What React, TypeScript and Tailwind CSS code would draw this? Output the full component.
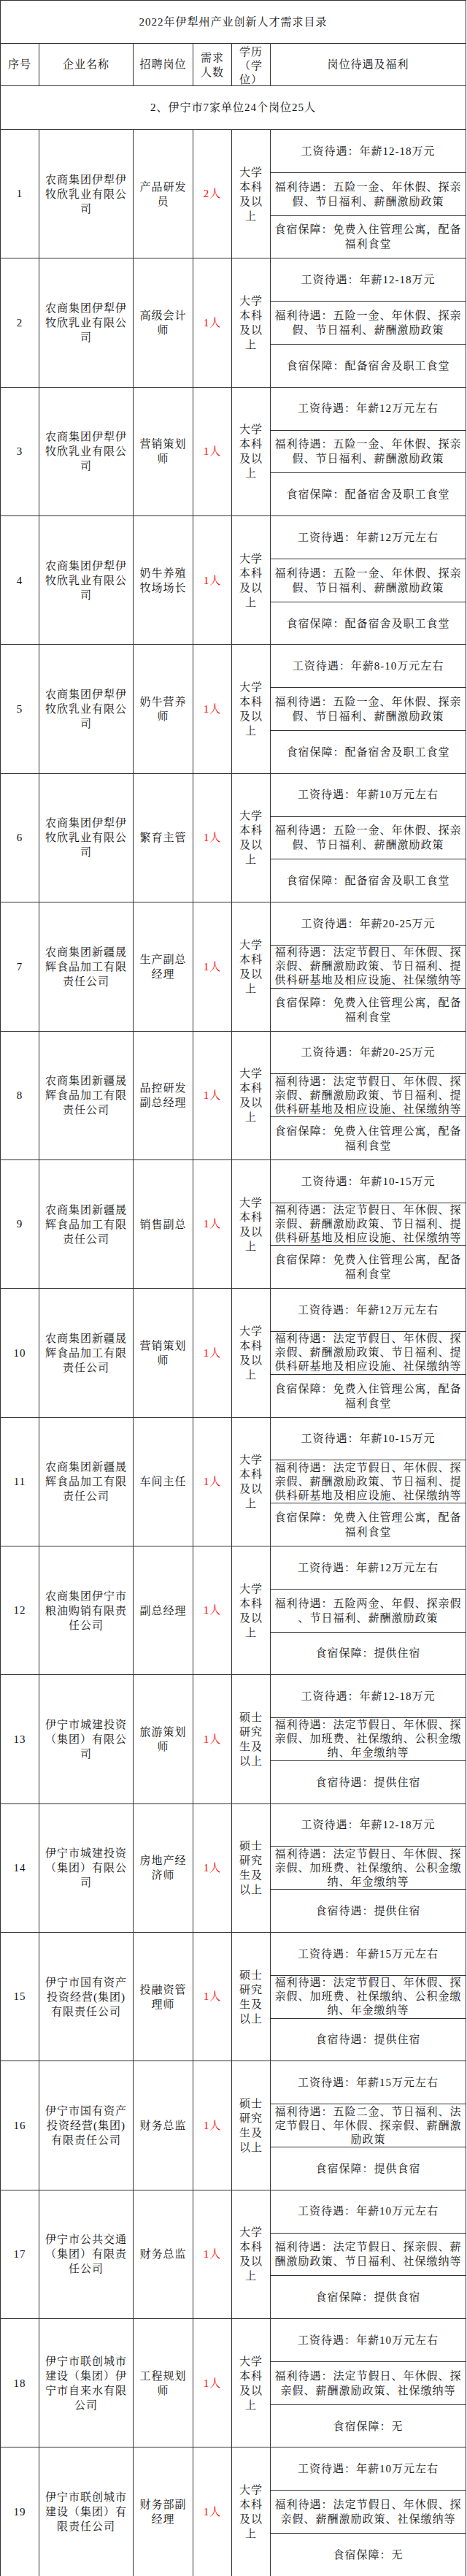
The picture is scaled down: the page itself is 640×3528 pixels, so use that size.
import React from "react";

const W1 = ["福利待遇：五险一金、年休假、探亲", "假、节日福利、薪酬激励政策"];
const W2 = ["福利待遇：法定节假日、年休假、探", "亲假、薪酬激励政策、节日福利、提", "供科研基地及相应设施、社保缴纳等"];
const W3 = ["福利待遇：五险两金、年假、探亲假", "、节日福利、薪酬激励政策"];
const W4 = ["福利待遇：法定节假日、年休假、探", "亲假、加班费、社保缴纳、公积金缴", "纳、年金缴纳等"];
const W5 = ["福利待遇：五险二金、节日福利、法", "定节假日、年休假、探亲假、薪酬激", "励政策"];
const W6 = ["福利待遇：法定节假日、探亲假、薪", "酬激励政策、节日福利、社保缴纳等"];
const W7 = ["福利待遇：法定节假日、年休假、探", "亲假、薪酬激励政策、社保缴纳等"];

const F1 = ["食宿保障：免费入住管理公寓，配备", "福利食堂"];
const F2 = ["食宿保障：配备宿舍及职工食堂"];
const F3 = ["食宿保障：提供住宿"];
const F4 = ["食宿待遇：提供住宿"];
const F5 = ["食宿保障：提供食宿"];
const F6 = ["食宿保障：无"];

const C1 = ["农商集团伊犁伊", "牧欣乳业有限公", "司"];
const C2 = ["农商集团新疆晟", "辉食品加工有限", "责任公司"];
const C3 = ["农商集团伊宁市", "粮油购销有限责", "任公司"];
const C4 = ["伊宁市城建投资", "（集团）有限公", "司"];
const C5 = ["伊宁市国有资产", "投资经营(集团)", "有限责任公司"];
const C6 = ["伊宁市公共交通", "（集团）有限责", "任公司"];
const C7 = ["伊宁市联创城市", "建设（集团）伊", "宁市自来水有限", "公司"];
const C8 = ["伊宁市联创城市", "建设（集团）有", "限责任公司"];

const E1 = ["大学", "本科", "及以", "上"];
const E2 = ["硕士", "研究", "生及", "以上"];

type Row = {
  company: string[];
  pos: string[];
  num: string;
  edu: string[];
  salary: string;
  welfare: string[];
  food: string[];
};

const rows: Row[] = [
  { company: C1, pos: ["产品研发", "员"], num: "2人", edu: E1, salary: "工资待遇：年薪12-18万元", welfare: W1, food: F1 },
  { company: C1, pos: ["高级会计", "师"], num: "1人", edu: E1, salary: "工资待遇：年薪12-18万元", welfare: W1, food: F2 },
  { company: C1, pos: ["营销策划", "师"], num: "1人", edu: E1, salary: "工资待遇：年薪12万元左右", welfare: W1, food: F2 },
  { company: C1, pos: ["奶牛养殖", "牧场场长"], num: "1人", edu: E1, salary: "工资待遇：年薪12万元左右", welfare: W1, food: F2 },
  { company: C1, pos: ["奶牛营养", "师"], num: "1人", edu: E1, salary: "工资待遇：年薪8-10万元左右", welfare: W1, food: F2 },
  { company: C1, pos: ["繁育主管"], num: "1人", edu: E1, salary: "工资待遇：年薪10万元左右", welfare: W1, food: F2 },
  { company: C2, pos: ["生产副总", "经理"], num: "1人", edu: E1, salary: "工资待遇：年薪20-25万元", welfare: W2, food: F1 },
  { company: C2, pos: ["品控研发", "副总经理"], num: "1人", edu: E1, salary: "工资待遇：年薪20-25万元", welfare: W2, food: F1 },
  { company: C2, pos: ["销售副总"], num: "1人", edu: E1, salary: "工资待遇：年薪10-15万元", welfare: W2, food: F1 },
  { company: C2, pos: ["营销策划", "师"], num: "1人", edu: E1, salary: "工资待遇：年薪12万元左右", welfare: W2, food: F1 },
  { company: C2, pos: ["车间主任"], num: "1人", edu: E1, salary: "工资待遇：年薪10-15万元", welfare: W2, food: F1 },
  { company: C3, pos: ["副总经理"], num: "1人", edu: E1, salary: "工资待遇：年薪12万元左右", welfare: W3, food: F3 },
  { company: C4, pos: ["旅游策划", "师"], num: "1人", edu: E2, salary: "工资待遇：年薪12-18万元", welfare: W4, food: F4 },
  { company: C4, pos: ["房地产经", "济师"], num: "1人", edu: E2, salary: "工资待遇：年薪12-18万元", welfare: W4, food: F4 },
  { company: C5, pos: ["投融资管", "理师"], num: "1人", edu: E2, salary: "工资待遇：年薪15万元左右", welfare: W4, food: F4 },
  { company: C5, pos: ["财务总监"], num: "1人", edu: E2, salary: "工资待遇：年薪15万元左右", welfare: W5, food: F5 },
  { company: C6, pos: ["财务总监"], num: "1人", edu: E1, salary: "工资待遇：年薪10万元左右", welfare: W6, food: F5 },
  { company: C7, pos: ["工程规划", "师"], num: "1人", edu: E1, salary: "工资待遇：年薪10万元左右", welfare: W7, food: F6 },
  { company: C8, pos: ["财务部副", "经理"], num: "1人", edu: E1, salary: "工资待遇：年薪10万元左右", welfare: W7, food: F6 },
];

function Lines({ lines, tight }: { lines: string[]; tight?: boolean }) {
  return (
    <div className={`flex flex-col items-center text-center whitespace-nowrap ${tight ? "leading-[19px]" : "leading-[20px]"}`}>
      {lines.map((l, i) => (
        <span key={i}>{l}</span>
      ))}
    </div>
  );
}

const cell = "flex items-center justify-center border-r border-[#333] overflow-hidden";

export default function App() {
  return (
    <div className="w-[640px] bg-white text-[#111] text-[15px] tracking-[1px] font-['Liberation_Serif','Noto_Serif_CJK_SC','Noto_Sans_CJK_SC',serif]">
      <div className="w-[639px] border-l border-t border-[#333]">
        {/* Title */}
        <div className="h-[59px] flex items-center justify-center border-r border-b border-[#333]">
          2022年伊犁州产业创新人才需求目录
        </div>
        {/* Header */}
        <div className="grid grid-cols-[53px_129px_82px_53px_53px_1fr] h-[58px] border-b border-[#333]">
          <div className={cell}>序号</div>
          <div className={cell}>企业名称</div>
          <div className={cell}>招聘岗位</div>
          <div className={cell}>
            <Lines lines={["需求", "人数"]} />
          </div>
          <div className={`${cell} pt-[4px]`}>
            <Lines lines={["学历", "（学", "位）"]} tight />
          </div>
          <div className={cell}>岗位待遇及福利</div>
        </div>
        {/* Section */}
        <div className="h-[60px] flex items-center justify-center border-r border-b border-[#333]">
          2、伊宁市7家单位24个岗位25人
        </div>
        {/* Rows */}
        {rows.map((r, i) => (
          <div
            key={i}
            className="grid grid-cols-[53px_129px_82px_53px_53px_1fr] h-[176.37px] border-b border-[#333]"
          >
            <div className={cell}>{i + 1}</div>
            <div className={cell}>
              <Lines lines={r.company} />
            </div>
            <div className={cell}>
              <Lines lines={r.pos} />
            </div>
            <div className={`${cell} text-[#ff0000]`}>{r.num}</div>
            <div className={cell}>
              <Lines lines={r.edu} />
            </div>
            <div className="flex flex-col border-r border-[#333]">
              <div className="flex-1 flex items-center justify-center border-b border-[#333] whitespace-nowrap">
                {r.salary}
              </div>
              <div className="flex-1 flex items-center justify-center border-b border-[#333] overflow-hidden">
                <Lines lines={r.welfare} tight={r.welfare.length > 2} />
              </div>
              <div className="flex-1 flex items-center justify-center overflow-hidden">
                <Lines lines={r.food} />
              </div>
            </div>
          </div>
        ))}
      </div>
    </div>
  );
}
